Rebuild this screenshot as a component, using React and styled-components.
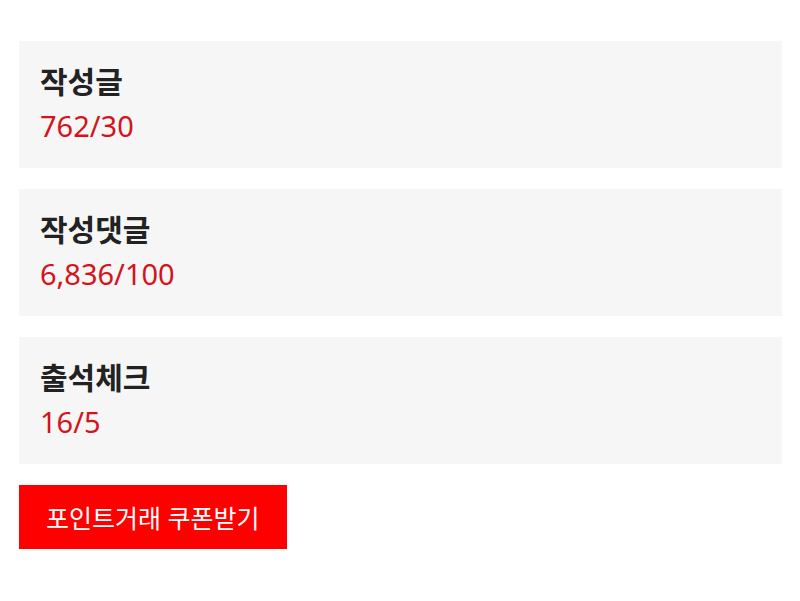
import React from 'react'
import styled, { createGlobalStyle } from 'styled-components';

const GlobalStyle = createGlobalStyle`
    body {
        margin:0;
        background:#fff;
        font-family:"Noto Sans", "Noto Sans CJK KR", sans-serif;
    }
`;

const Wrapper = styled.div`
    display:flex;
    flex-direction:column;
    align-items:flex-start;
    gap:21px;
    padding:41px 18px 0 19px;
`;

const StatBox = styled.div`
    align-self:stretch;
    display:flex;
    flex-direction:column;
    padding:19px 21px 20px;
    background-color:#f6f6f6;
`;

const Title = styled.div`
    color:#222;
    font-size:30px;
    font-weight:700;
    line-height:44px;
`;

const Value = styled.div`
    color:#d2141c;
    font-size:29px;
    line-height:44px;
`;

const CouponButton = styled.button`
    height:64px;
    padding:0 27px;
    border:none;
    background-color:#ff0000;
    color:#fff;
    font-family:inherit;
    font-size:25px;
    cursor:pointer;
`;

const App = () => {
    const stats = [
        { title: '작성글', value: '762/30' },
        { title: '작성댓글', value: '6,836/100' },
        { title: '출석체크', value: '16/5' },
    ]

  return (
    <Wrapper>
        <GlobalStyle />
        {
            stats.map((stat) => (
                <StatBox key={stat.title}>
                    <Title>{stat.title}</Title>
                    <Value>{stat.value}</Value>
                </StatBox>
            ))
        }
        <CouponButton>포인트거래 쿠폰받기</CouponButton>
    </Wrapper>
  )
}

export default App
